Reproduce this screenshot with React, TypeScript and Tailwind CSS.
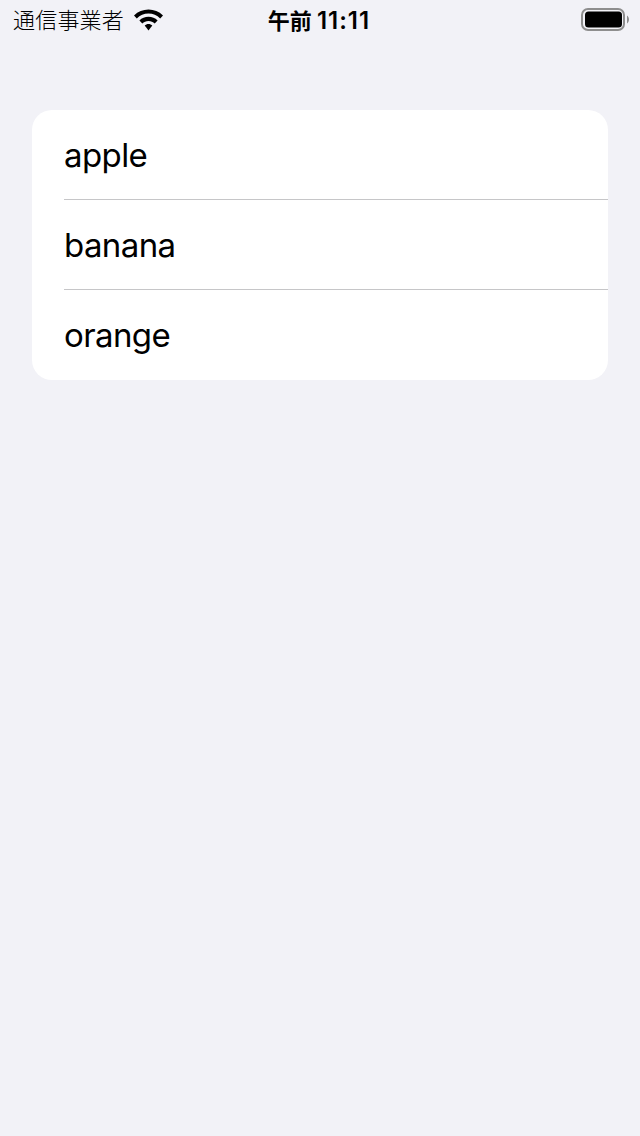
const items = ["apple", "banana", "orange"];

function WifiIcon() {
  return (
    <svg width="30" height="22" viewBox="0 0 30 22" fill="#000">
      <path d="M14.5 0.5C9 0.5 4 2.6 0 6.4L2.8 9.4C6 6.4 10 4.6 14.5 4.6S23 6.4 26.2 9.4L29 6.4C25 2.6 20 0.5 14.5 0.5Z" />
      <path d="M14.5 7.8C11 7.8 7.8 9.1 5.4 11.5L8.3 14.6C9.9 13 12 12 14.5 12S19.1 13 20.7 14.6L23.6 11.5C21.2 9.1 18 7.8 14.5 7.8Z" />
      <path d="M14.5 15C13 15 11.7 15.6 10.7 16.6L14.5 21.5L18.3 16.6C17.3 15.6 16 15 14.5 15Z" />
    </svg>
  );
}

function BatteryIcon() {
  return (
    <svg width="49" height="24" viewBox="0 0 49 24">
      <rect x="2" y="1" width="42" height="21" rx="6" fill="none" stroke="#8e8e8e" strokeWidth="2" />
      <rect x="5" y="3.5" width="37" height="16" rx="3.5" fill="#000" />
      <path d="M47 7.5C48.3 8.5 49 10 49 11.5S48.3 14.5 47 15.5Z" fill="#8e8e8e" />
    </svg>
  );
}

export default function App() {
  return (
    <div className="min-h-[1136px] bg-[#f2f2f7] font-['Inter','Noto_Sans_CJK_JP',sans-serif] text-black">
      {/* Status bar */}
      <div className="grid h-10 grid-cols-3 items-center pl-[13px] pr-[11px]">
        <div className="flex items-center gap-[10px]">
          <span className="whitespace-nowrap text-[22px] font-light leading-none tracking-[0.2px]">通信事業者</span>
          <WifiIcon />
        </div>
        <div className="flex items-center justify-center gap-[5px] whitespace-nowrap pr-1 pt-0.5 text-[22px] font-semibold leading-none">
          <span>午前</span>
          <span className="text-[24px] tracking-[1px]">11:11</span>
        </div>
        <div className="flex justify-end">
          <BatteryIcon />
        </div>
      </div>

      {/* List */}
      <div className="mx-8 mt-[70px] overflow-hidden rounded-[20px] bg-white">
        {items.map((item, index) => (
          <div key={item} className="pl-8">
            <div
              className={
                index < items.length - 1
                  ? "flex h-[90px] items-center border-b border-[#c6c6c8] pt-0.5 text-[33px] tracking-[-0.6px]"
                  : "flex h-[90px] items-center pt-0.5 text-[33px] tracking-[-0.6px]"
              }
            >
              {item}
            </div>
          </div>
        ))}
      </div>
    </div>
  );
}
